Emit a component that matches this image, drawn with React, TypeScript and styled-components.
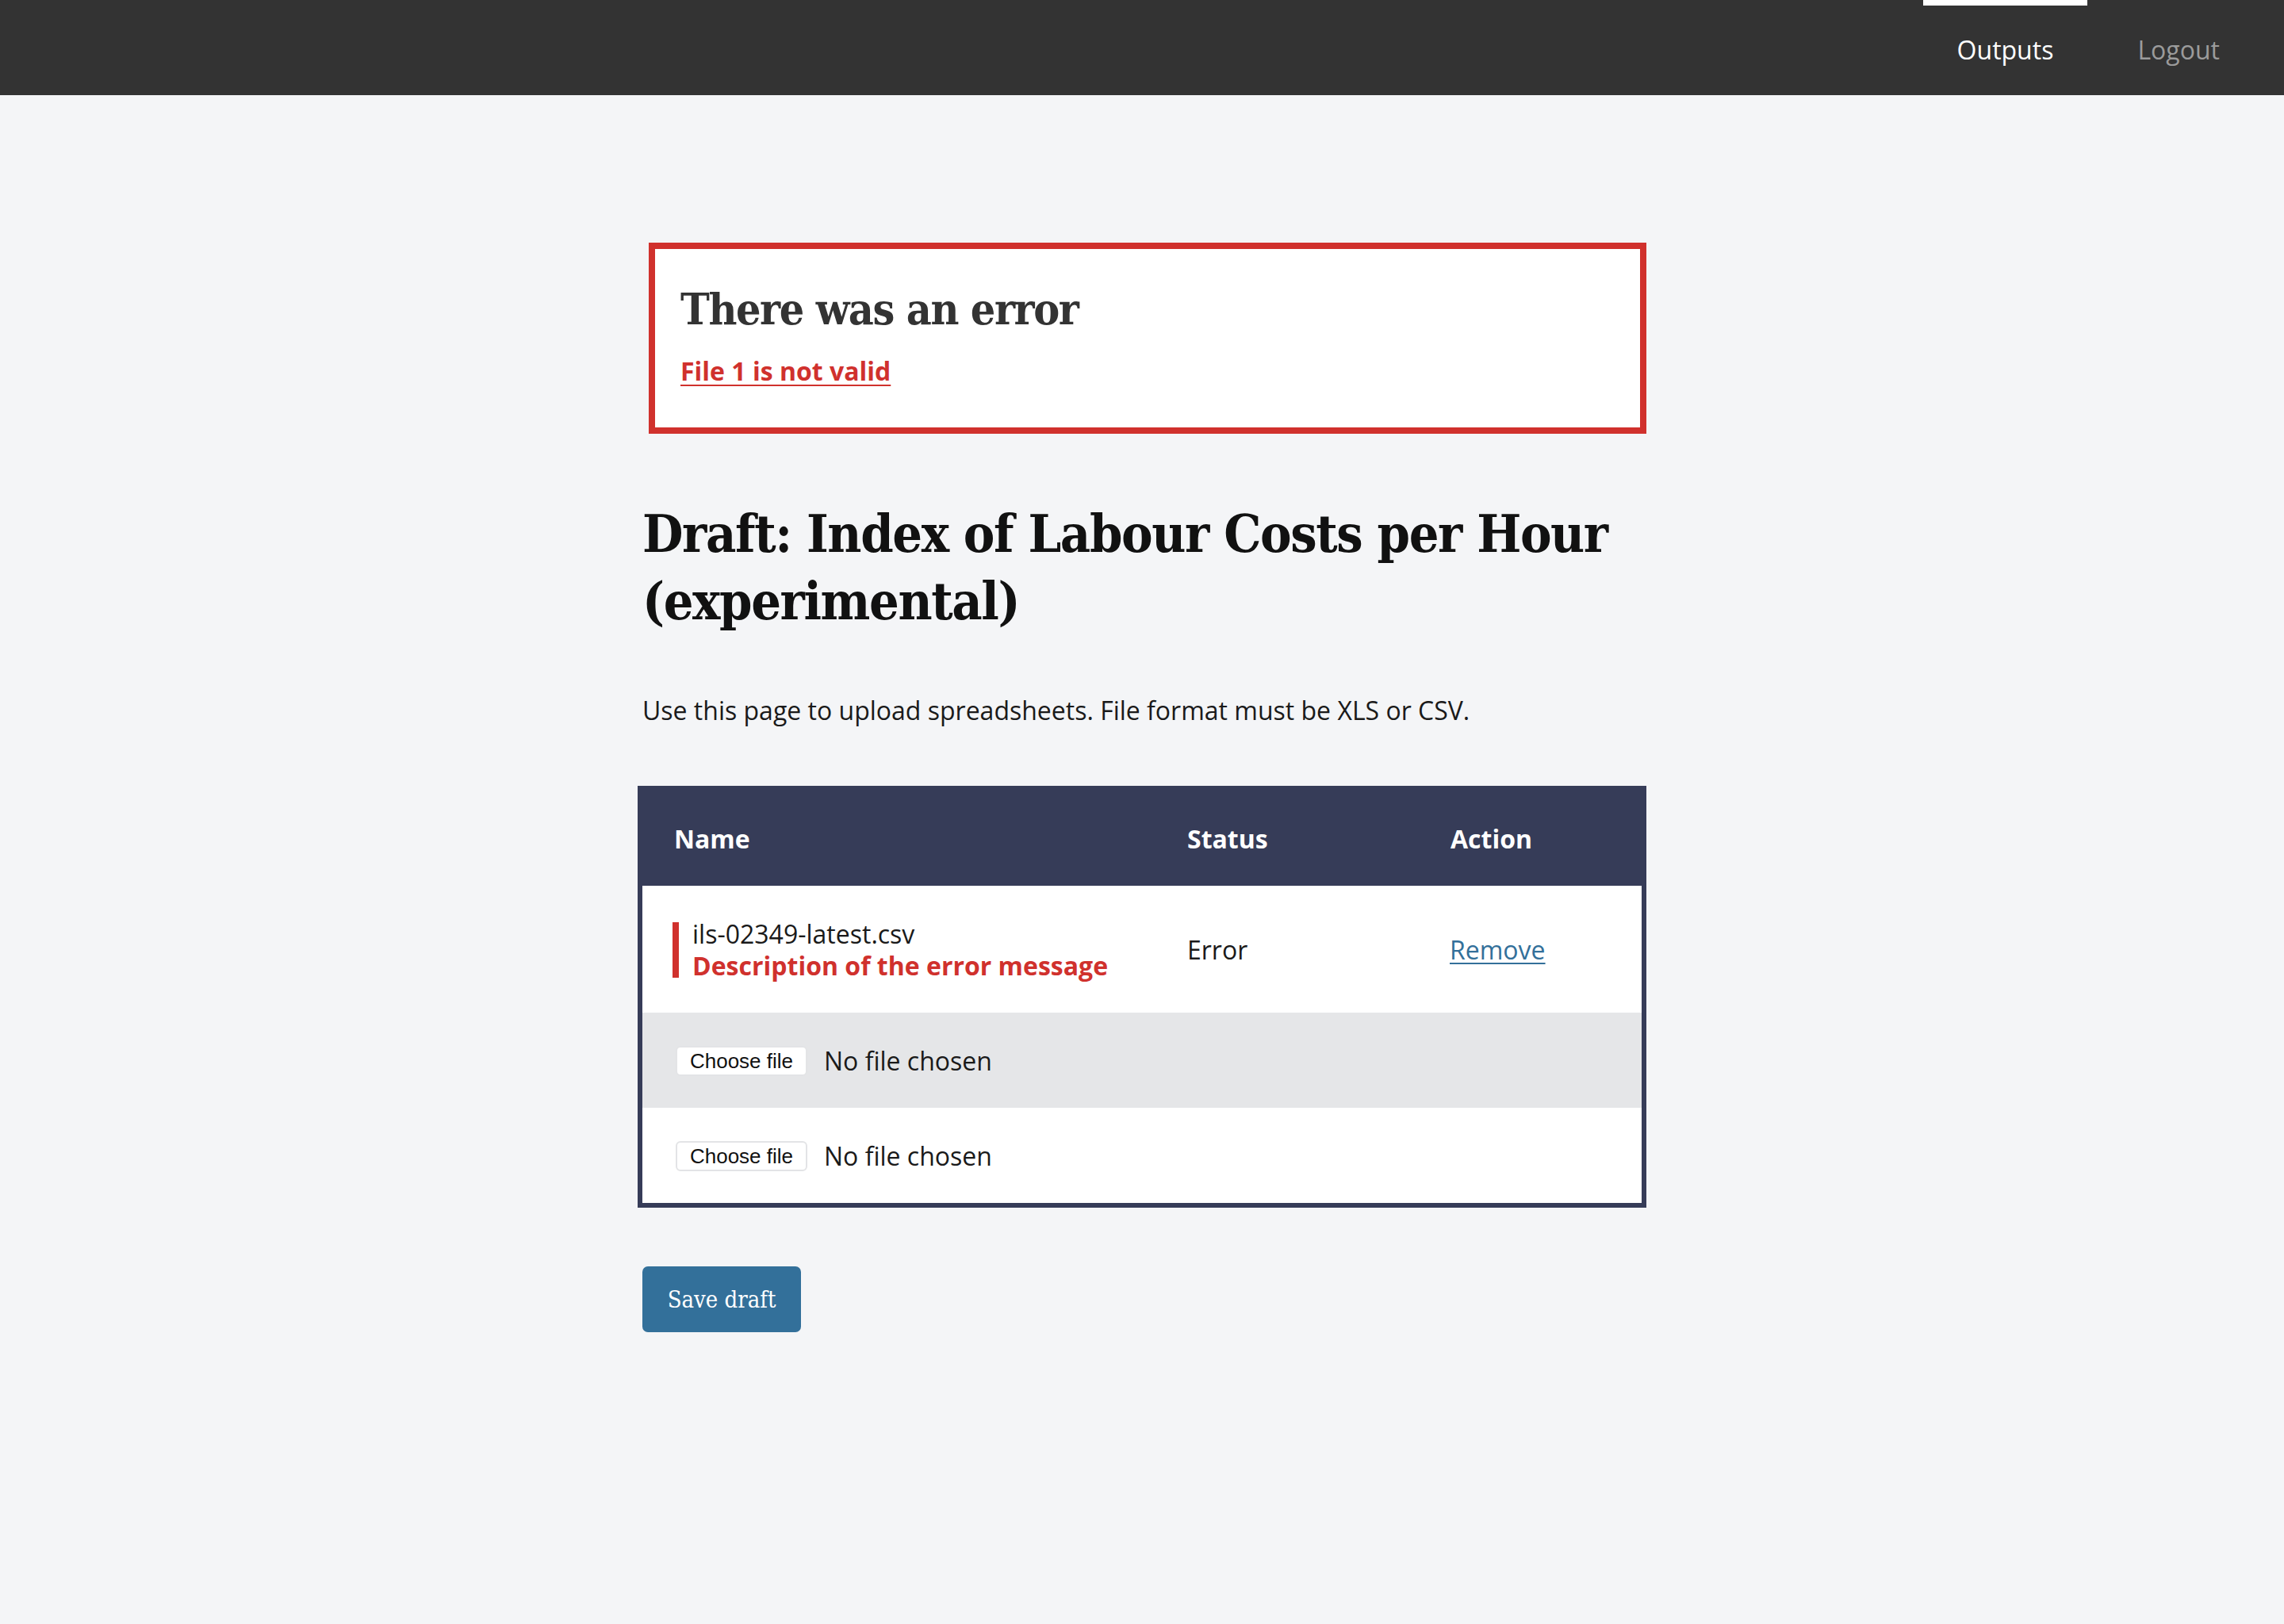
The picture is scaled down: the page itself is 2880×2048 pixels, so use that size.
import React from "react";
import styled, { createGlobalStyle } from "styled-components";

const GlobalStyle = createGlobalStyle`
  html, body {
    margin: 0;
    padding: 0;
    background: #f4f5f7;
  }
  body {
    font-family: "Open Sans", "Liberation Sans", sans-serif;
    color: #222222;
  }
  * { box-sizing: border-box; }
`;

const slab = `"Roboto Slab", "DejaVu Serif Condensed", "DejaVu Serif", serif`;

const Nav = styled.header`
  height: 120px;
  background: #333333;
  display: flex;
  justify-content: flex-end;
`;

const NavList = styled.nav`
  display: flex;
  gap: 20px;
  padding-right: 38px;
`;

const NavItem = styled.a<{ $active?: boolean }>`
  display: flex;
  align-items: center;
  height: 120px;
  padding: 4px 43px 0;
  font-size: 32px;
  text-decoration: none;
  color: ${(p) => (p.$active ? "#ffffff" : "#9b9b9b")};
  box-shadow: ${(p) => (p.$active ? "inset 0 7px 0 #ffffff" : "none")};
`;

const Main = styled.main`
  width: 1272px;
  margin: 0 auto;
  padding: 186px 0 200px;
`;

const ErrorPanel = styled.section`
  margin-left: 14px;
  border: 8px solid #d0312d;
  background: #ffffff;
  padding: 41px 32px 50px;
`;

const ErrorTitle = styled.h2`
  margin: 0;
  font-family: ${slab};
  font-weight: 700;
  font-size: 55px;
  letter-spacing: -1.4px;
  line-height: 70px;
  color: #333333;
`;

const ErrorLink = styled.a`
  display: inline-block;
  margin-top: 22px;
  font-size: 32px;
  line-height: 42px;
  font-weight: 700;
  color: #d0312d;
  text-decoration: underline;
  text-decoration-thickness: 2px;
  text-underline-offset: 5px;
`;

const Title = styled.h1`
  margin: 84px 0 0;
  padding-left: 6px;
  font-family: ${slab};
  font-weight: 700;
  font-size: 66px;
  letter-spacing: -1.4px;
  line-height: 85px;
  color: #111111;
`;

const Lead = styled.p`
  margin: 74px 0 0;
  padding-left: 6px;
  font-size: 32px;
  line-height: 42px;
  color: #1a1a1a;
`;

const Table = styled.div`
  margin-top: 74px;
  border: 6px solid #363c58;
  background: #ffffff;
`;

const Row = styled.div<{ $kind: "head" | "white" | "grey"; $h: number }>`
  display: grid;
  grid-template-columns: 647px 332px 1fr;
  align-items: center;
  height: ${(p) => p.$h}px;
  background: ${(p) =>
    p.$kind === "head" ? "#363c58" : p.$kind === "grey" ? "#e5e6e8" : "#ffffff"};
  color: ${(p) => (p.$kind === "head" ? "#ffffff" : "#1a1a1a")};
  font-size: 32px;
  line-height: 42px;
  font-weight: ${(p) => (p.$kind === "head" ? 700 : 400)};
`;

const Cell = styled.div<{ $pad?: number }>`
  padding-left: ${(p) => p.$pad ?? 40}px;
  padding-top: 2px;
  display: flex;
  align-items: center;
`;

const ErrorName = styled.div`
  border-left: 8px solid #d0312d;
  padding-left: 17px;
  display: flex;
  flex-direction: column;
  gap: 10px;
`;

const FileName = styled.span`
  line-height: 30px;
  color: #1a1a1a;
`;

const FileError = styled.span`
  line-height: 30px;
  font-weight: 700;
  color: #d0312d;
`;

const ActionLink = styled.a`
  color: #33709a;
  text-decoration: underline;
  text-decoration-thickness: 2px;
  text-underline-offset: 4px;
`;

const FileField = styled.label`
  display: flex;
  align-items: center;
  gap: 21px;
`;

const ChooseButton = styled.span`
  display: inline-flex;
  align-items: center;
  justify-content: center;
  width: 166px;
  height: 38px;
  background: #ffffff;
  border: 2px solid #e3e4e6;
  border-radius: 6px;
  font-family: "Liberation Sans", Arial, sans-serif;
  font-size: 26px;
  color: #111111;
`;

const NoFile = styled.span`
  font-size: 32px;
  color: #1a1a1a;
`;

const SaveButton = styled.button`
  margin: 74px 0 0 6px;
  width: 200px;
  height: 83px;
  border: 0;
  border-radius: 7px;
  background: #33709a;
  color: #ffffff;
  font-family: ${slab};
  font-size: 29px;
  font-weight: 400;
  cursor: pointer;
`;

function FileInputRow({ grey }: { grey?: boolean }) {
  return (
    <Row $kind={grey ? "grey" : "white"} $h={120}>
      <Cell $pad={42}>
        <FileField>
          <ChooseButton>Choose file</ChooseButton>
          <NoFile>No file chosen</NoFile>
        </FileField>
      </Cell>
      <Cell />
      <Cell />
    </Row>
  );
}

export default function App() {
  return (
    <>
      <GlobalStyle />
      <Nav>
        <NavList>
          <NavItem $active href="#">Outputs</NavItem>
          <NavItem href="#">Logout</NavItem>
        </NavList>
      </Nav>
      <Main>
        <ErrorPanel>
          <ErrorTitle>There was an error</ErrorTitle>
          <ErrorLink href="#">File 1 is not valid</ErrorLink>
        </ErrorPanel>
        <Title>Draft: Index of Labour Costs per Hour (experimental)</Title>
        <Lead>Use this page to upload spreadsheets. File format must be XLS or CSV.</Lead>
        <Table>
          <Row $kind="head" $h={120}>
            <Cell>Name</Cell>
            <Cell>Status</Cell>
            <Cell>Action</Cell>
          </Row>
          <Row $kind="white" $h={160}>
            <Cell $pad={38}>
              <ErrorName>
                <FileName>ils-02349-latest.csv</FileName>
                <FileError>Description of the error message</FileError>
              </ErrorName>
            </Cell>
            <Cell>Error</Cell>
            <Cell $pad={39}>
              <ActionLink href="#">Remove</ActionLink>
            </Cell>
          </Row>
          <FileInputRow grey />
          <FileInputRow />
        </Table>
        <SaveButton>Save draft</SaveButton>
      </Main>
    </>
  );
}
